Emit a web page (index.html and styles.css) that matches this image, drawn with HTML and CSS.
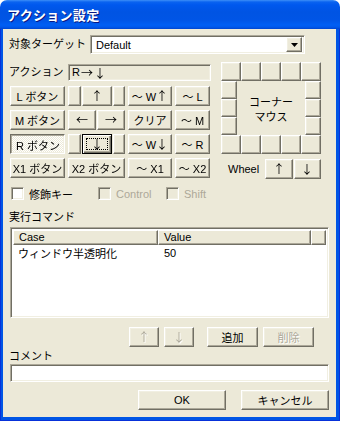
FILE: index.html
```html
<!DOCTYPE html>
<html lang="ja">
<head>
<meta charset="utf-8">
<title>アクション設定</title>
<link rel="stylesheet" href="styles.css">
</head>
<body>
<div class="win">
  <div class="titlebar"><span class="title">アクション設定</span></div>
  <div class="frame">
    <div class="client">
      <div class="target-row">
        <span class="lbl target-lbl">対象ターゲット</span>
        <div class="combo sunken">
          <span class="combo-text">Default</span>
          <span class="btn ddbtn"><svg width="7" height="4" viewBox="0 0 7 4"><path d="M0 0h7L3.5 4z" fill="#000"/></svg></span>
        </div>
      </div>

      <div class="upper">
        <div class="left">
          <div class="action-row">
            <span class="lbl action-lbl">アクション</span>
            <div class="field sunken ro">R <span class="arr">&#x2192;&#xFE0E;</span><span class="arr">&#x2193;&#xFE0E;</span></div>
          </div>
          <div class="btngrid">
            <button class="btn">L ボタン</button>
            <div class="cluster">
              <button class="btn sm"></button><button class="btn mid"><span class="arr">&#x2191;&#xFE0E;</span></button><button class="btn sm2"></button>
            </div>
            <button class="btn">～ W<span class="arr">&#x2191;&#xFE0E;</span></button>
            <button class="btn">～ L</button>

            <button class="btn">M ボタン</button>
            <div class="cluster">
              <button class="btn half"><span class="arr">&#x2190;&#xFE0E;</span></button><button class="btn half2"><span class="arr">&#x2192;&#xFE0E;</span></button>
            </div>
            <button class="btn">クリア</button>
            <button class="btn">～ M</button>

            <button class="btn checked">R ボタン</button>
            <div class="cluster">
              <button class="btn sm"></button><button class="btn mid default"><span class="arr">&#x2193;&#xFE0E;</span></button><button class="btn sm2"></button>
            </div>
            <button class="btn">～ W<span class="arr">&#x2193;&#xFE0E;</span></button>
            <button class="btn">～ R</button>

            <button class="btn">X1 ボタン</button>
            <button class="btn">X2 ボタン</button>
            <button class="btn">～ X1</button>
            <button class="btn">～ X2</button>
          </div>
        </div>

        <div class="right">
          <div class="corner">
            <button class="btn c-full"></button><button class="btn c-full"></button><button class="btn c-full"></button><button class="btn c-full"></button><button class="btn c-full"></button>
            <button class="btn c-left r2"></button>
            <div class="corner-label"><span>コーナー</span><span>マウス</span></div>
            <button class="btn c-right r2"></button>
            <button class="btn c-left r3"></button>
            <button class="btn c-right r3"></button>
            <button class="btn c-left r4"></button>
            <button class="btn c-right r4"></button>
            <button class="btn c-full r5"></button><button class="btn c-full r5"></button><button class="btn c-full r5"></button><button class="btn c-full r5"></button><button class="btn c-full r5"></button>
          </div>
          <div class="wheel-row">
            <span class="lbl wheel-lbl">Wheel</span>
            <button class="btn wbtn"><span class="arr">&#x2191;&#xFE0E;</span></button>
            <button class="btn wbtn"><span class="arr">&#x2193;&#xFE0E;</span></button>
          </div>
        </div>
      </div>

      <div class="checks">
        <label class="chk chk1"><span class="box sunken"></span><span>修飾キー</span></label>
        <label class="chk chk2 disabled"><span class="box sunken"></span><span>Control</span></label>
        <label class="chk chk3 disabled"><span class="box sunken"></span><span>Shift</span></label>
      </div>

      <div class="lbl section-lbl">実行コマンド</div>
      <div class="listview sunken">
        <div class="lv-head">
          <div class="hcell h-case">Case</div>
          <div class="hcell h-value">Value</div>
          <div class="hcell h-fill"></div>
        </div>
        <div class="lv-row">
          <div class="cell c-case">ウィンドウ半透明化</div>
          <div class="cell c-value">50</div>
        </div>
      </div>

      <div class="cmd-row">
        <button class="btn dis b-up"><span class="arr">&#x2191;&#xFE0E;</span></button>
        <button class="btn dis b-down"><span class="arr">&#x2193;&#xFE0E;</span></button>
        <button class="btn b-add">追加</button>
        <button class="btn dis b-del">削除</button>
      </div>

      <div class="lbl comment-lbl">コメント</div>
      <div class="field sunken comment"></div>

      <div class="ok-row">
        <button class="btn okbtn">OK</button>
        <button class="btn okbtn">キャンセル</button>
      </div>
    </div>
  </div>
</div>
</body>
</html>
```
FILE: styles.css
```css
* { box-sizing: border-box; }
html, body { margin: 0; padding: 0; background: #fff; }
body {
  width: 340px;
  height: 421px;
  overflow: hidden;
  font-family: "Liberation Sans", "Noto Sans CJK JP", sans-serif;
  font-size: 11px;
  color: #000;
}
.win { width: 340px; height: 421px; display: flex; flex-direction: column; }

.titlebar {
  height: 29px;
  border-radius: 7px 7px 0 0;
  background: linear-gradient(to bottom,
    #3D8FF7 0px, #0A63F0 2px, #0058EE 5px, #0054E3 12px,
    #0055E6 20px, #005FF4 25px, #0059EC 27px, #0046CF 29px);
  display: flex;
  align-items: center;
  padding-left: 7px;
  padding-bottom: 1px;
}
.title {
  color: #fff;
  font-family: "Noto Sans CJK JP", sans-serif;
  font-weight: bold;
  font-size: 13px;
  text-shadow: 1px 1px #0A1883;
  letter-spacing: 0.3px;
}

.frame {
  flex: 1;
  display: flex;
  background: #0055E5;
  border-left: 1px solid #0831D9;
  border-right: 1px solid #0831D9;
  border-bottom: 1px solid #0831D9;
  padding: 0 3px 3px 2px;
}
.client {
  flex: 1;
  background: #ECE9D8;
  padding: 6px 7px 0 7px;
  display: flex;
  flex-direction: column;
}

.lbl { line-height: 13px; white-space: nowrap; }
.arr {
  font-family: "Noto Sans CJK JP", sans-serif;
  font-variant-emoji: text;
  font-size: 12px;
  line-height: 12px;
  display: inline-block;
  text-align: center;
  color: inherit;
  will-change: transform;
  transform: translateZ(0);
}

/* 3D primitives */
.btn {
  position: relative;
  background: #ECE9D8;
  border: 1px solid;
  border-color: #fff #716F64 #716F64 #fff;
  box-shadow: inset -1px -1px #ACA899, inset 1px 1px #F1EFE2;
  display: flex;
  align-items: center;
  justify-content: center;
  font: inherit;
  color: #000;
  padding: 0;
  margin: 0;
  height: 20px;
  white-space: nowrap;
  outline: none;
}
.sunken {
  border: 1px solid;
  border-color: #ACA899 #fff #fff #ACA899;
  box-shadow: inset 1px 1px #716F64, inset -1px -1px #F1EFE2;
}
.btn.checked {
  border-color: #716F64 #fff #fff #716F64;
  box-shadow: inset 1px 1px #ACA899, inset -1px -1px #F1EFE2;
  background: repeating-conic-gradient(#fff 0 25%, #ECE9D8 0 50%) 0 0 / 2px 2px;
  padding: 1px 0 0 1px;
}
.btn.default {
  border: 1px solid #000;
  box-shadow: inset 1px 1px #fff, inset -1px -1px #716F64, inset -2px -2px #ACA899;
}
.btn.default::after {
  content: "";
  position: absolute;
  left: 3px; top: 3px; right: 3px; bottom: 3px;
  border: 1px dotted #000;
  pointer-events: none;
}
.btn.dis {
  color: #ACA899;
  text-shadow: 1px 1px #fff;
}

/* target row */
.target-row { display: flex; height: 19px; align-items: center; }
.target-lbl { width: 80px; margin-left: -1px; margin-right: 1px; }
.combo {
  width: 215px;
  height: 19px;
  background: #fff;
  display: flex;
  align-items: center;
  padding: 2px 2px 2px 5px;
}
.combo-text { flex: 1; }
.ddbtn { width: 16px; height: 15px; }

/* upper */
.upper { display: flex; margin-top: 8px; gap: 10px; }
.left { width: 201px; }
.action-row { display: flex; align-items: center; margin-top: 2px; height: 17px; }
.action-lbl { width: 59px; margin-left: -1px; }
.field { height: 17px; }
.ro {
  width: 143px;
  background: #ECE9D8;
  padding: 1px 3px;
  line-height: 13px;
  display: flex;
  align-items: center;
  gap: 1px;
}

.btngrid {
  margin-top: 5px;
  display: grid;
  grid-template-columns: 55px 57px 44px 35px;
  grid-auto-rows: 20px;
  column-gap: 3px;
  row-gap: 4px;
}
.cluster { display: flex; gap: 1px; }
.cluster .sm { width: 13px; }
.cluster .mid { width: 30px; }
.cluster .sm2 { width: 12px; }
.cluster .half { width: 28px; }
.cluster .half2 { width: 28px; }

.right { width: 100px; }
.corner {
  display: grid;
  grid-template-columns: repeat(5, 20px);
  grid-template-rows: 19px 18px 18px 18px 19px;
}
.corner .btn { height: auto; }
.c-left { width: 16px; justify-self: start; grid-column: 1; }
.c-right { width: 16px; justify-self: end; grid-column: 5; }
.r2 { grid-row: 2; }
.r3 { grid-row: 3; }
.r4 { grid-row: 4; }
.r5 { grid-row: 5; }
.corner-label {
  grid-column: 2 / 5;
  grid-row: 2 / 5;
  display: flex;
  flex-direction: column;
  align-items: center;
  justify-content: center;
  text-align: center;
  line-height: 15px;
  padding-top: 2px;
  font-family: "Noto Sans CJK JP", sans-serif;
}
.wheel-row { display: flex; align-items: center; margin-top: 5px; }
.wheel-lbl { margin-left: 7px; width: 37px; }
.wbtn { width: 28px; }
.wbtn + .wbtn { width: 27px; margin-left: 1px; }

/* checks */
.checks { display: flex; margin-top: 8px; height: 13px; align-items: center; }
.chk { display: flex; align-items: center; gap: 5px; }
.chk1 { margin-left: 1px; width: 87px; }
.chk2 { width: 68px; }
.box { width: 13px; height: 13px; background: #fff; display: block; }
.chk.disabled { color: #ACA899; }
.chk.disabled .box { background: #ECE9D8; }

.section-lbl { margin-top: 11px; margin-left: -1px; }

/* listview */
.listview {
  margin-top: 3px;
  width: 319px;
  height: 91px;
  background: #fff;
  padding: 2px;
}
.lv-head { display: flex; height: 15px; }
.hcell {
  border: 1px solid;
  border-color: #fff #716F64 #716F64 #fff;
  box-shadow: inset -1px -1px #ACA899;
  background: #ECE9D8;
  padding-left: 5px;
  line-height: 13px;
}
.h-case { width: 145px; }
.h-value { width: 153px; }
.h-fill { flex: 1; }
.lv-row { display: flex; height: 14px; align-items: center; margin-top: 1px; }
.c-case { width: 145px; padding-left: 5px; font-family: "Noto Sans CJK JP", sans-serif; }
.c-value { padding-left: 6px; }

/* cmd buttons */
.cmd-row { display: flex; margin-top: 9px; padding-left: 119px; }
.b-up, .b-down { width: 30px; }
.b-down { margin-left: 5px; }
.b-add { width: 51px; margin-left: 13px; }
.b-del { width: 51px; margin-left: 5px; }

.comment-lbl { margin-top: 3px; margin-left: -1px; }
.comment { margin-top: 1px; width: 319px; height: 18px; background: #fff; }

.ok-row { display: flex; margin-top: 8px; padding-left: 128px; gap: 15px; }
.okbtn { width: 88px; }
```
